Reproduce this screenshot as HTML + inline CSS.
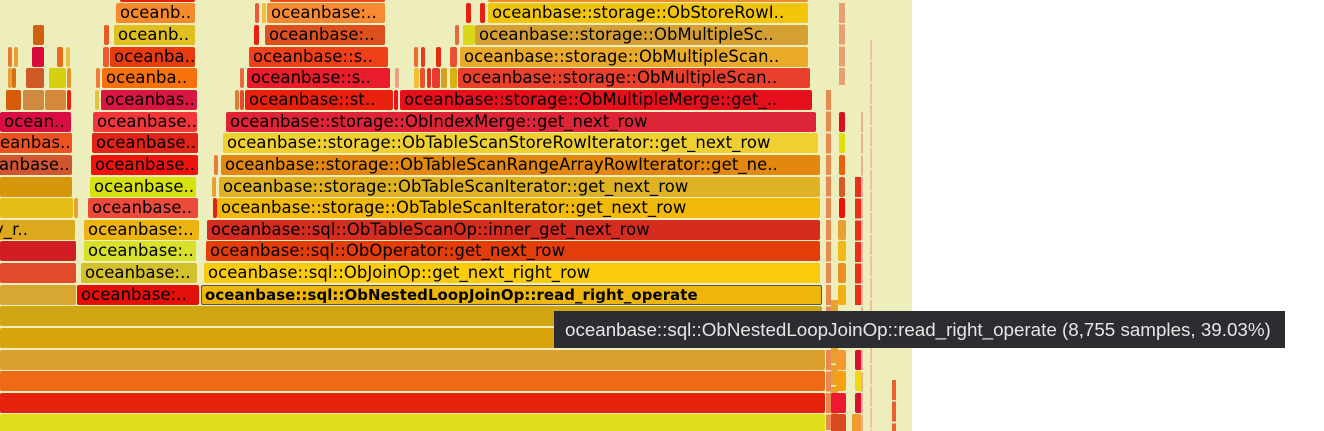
<!DOCTYPE html>
<html><head><meta charset="utf-8"><style>
*{margin:0;padding:0;box-sizing:border-box}
body{width:1324px;height:431px;background:#fff;position:relative;overflow:hidden;font-family:"DejaVu Sans","Liberation Sans",sans-serif}
#fg{position:absolute;left:0;top:0;width:912px;height:431px;background:#eeeebc;overflow:hidden}
.b{position:absolute;height:20px;border-radius:2px;font-size:16.4px;line-height:20px;color:#000;padding-left:4px;white-space:nowrap;overflow:hidden;letter-spacing:0.1px}
.tip{position:absolute;left:554px;top:311px;width:731px;height:37px;background:#2b2d31;color:#e6e6e6;font-family:"Liberation Sans",sans-serif;font-size:18.8px;line-height:37px;padding-left:11px;white-space:nowrap}
</style></head><body>
<div id="fg">
<div class="b" style="left:120px;top:-18px;width:75px;background:#e8200d"></div>
<div class="b" style="left:270px;top:-18px;width:115px;background:#e84a1a"></div>
<div class="b" style="left:488px;top:-18px;width:320px;background:#ec8a30"></div>
<div class="b" style="left:116px;top:3px;width:79px;background:#f88a2e">oceanb..</div>
<div class="b" style="left:267px;top:3px;width:118px;background:#f88a34">oceanbase:..</div>
<div class="b" style="left:255px;top:3px;width:3px;background:#e85a3a"></div>
<div class="b" style="left:262px;top:3px;width:3px;background:#f0c040"></div>
<div class="b" style="left:466px;top:3px;width:5px;background:#e82010"></div>
<div class="b" style="left:480px;top:3px;width:5px;background:#e82010"></div>
<div class="b" style="left:488px;top:3px;width:320px;background:#f2c40a">oceanbase::storage::ObStoreRowI..</div>
<div class="b" style="left:33px;top:25px;width:11px;background:#d06010"></div>
<div class="b" style="left:104px;top:25px;width:5px;background:#e85a20"></div>
<div class="b" style="left:114px;top:25px;width:81px;background:#e0c020">oceanb..</div>
<div class="b" style="left:254px;top:25px;width:5px;background:#e82010"></div>
<div class="b" style="left:265px;top:25px;width:120px;background:#dc5020">oceanbase:..</div>
<div class="b" style="left:455px;top:25px;width:3px;background:#e86a3a"></div>
<div class="b" style="left:463px;top:25px;width:12px;background:#d8d818"></div>
<div class="b" style="left:475px;top:25px;width:333px;background:#d4a034">oceanbase::storage::ObMultipleSc..</div>
<div class="b" style="left:8px;top:47px;width:3px;background:#e87a30"></div>
<div class="b" style="left:14px;top:47px;width:3px;background:#e8a030"></div>
<div class="b" style="left:32px;top:47px;width:12px;background:#d80a3a"></div>
<div class="b" style="left:57px;top:47px;width:6px;background:#e86a20"></div>
<div class="b" style="left:66px;top:47px;width:4px;background:#e8c040"></div>
<div class="b" style="left:103px;top:47px;width:6px;background:#f05a30"></div>
<div class="b" style="left:110px;top:47px;width:85px;background:#e83c0e">oceanba..</div>
<div class="b" style="left:249px;top:47px;width:139px;background:#f0401a">oceanbase::s..</div>
<div class="b" style="left:414px;top:47px;width:4px;background:#f06a30"></div>
<div class="b" style="left:421px;top:47px;width:4px;background:#e83a20"></div>
<div class="b" style="left:436px;top:47px;width:5px;background:#e82a10"></div>
<div class="b" style="left:450px;top:47px;width:7px;background:#e85030"></div>
<div class="b" style="left:460px;top:47px;width:348px;background:#eaaa2a">oceanbase::storage::ObMultipleScan..</div>
<div class="b" style="left:8px;top:68px;width:3px;background:#e8a030"></div>
<div class="b" style="left:12px;top:68px;width:4px;background:#d8701a"></div>
<div class="b" style="left:26px;top:68px;width:18px;background:#d05a28"></div>
<div class="b" style="left:49px;top:68px;width:17px;background:#d4d010"></div>
<div class="b" style="left:67px;top:68px;width:4px;background:#e8902a"></div>
<div class="b" style="left:96px;top:68px;width:4px;background:#f07a3a"></div>
<div class="b" style="left:102px;top:68px;width:95px;background:#f6700c">oceanba..</div>
<div class="b" style="left:240px;top:68px;width:4px;background:#e86a40"></div>
<div class="b" style="left:247px;top:68px;width:143px;background:#e81c2a">oceanbase::s..</div>
<div class="b" style="left:395px;top:68px;width:4px;background:#e8a080"></div>
<div class="b" style="left:414px;top:68px;width:5px;background:#f0c030"></div>
<div class="b" style="left:420px;top:68px;width:5px;background:#e85030"></div>
<div class="b" style="left:427px;top:68px;width:4px;background:#e83020"></div>
<div class="b" style="left:432px;top:68px;width:8px;background:#e83a30"></div>
<div class="b" style="left:441px;top:68px;width:6px;background:#d8a020"></div>
<div class="b" style="left:450px;top:68px;width:7px;background:#d8b010"></div>
<div class="b" style="left:458px;top:68px;width:352px;background:#e8402a">oceanbase::storage::ObMultipleScan..</div>
<div class="b" style="left:6px;top:90px;width:15px;background:#d85a0a"></div>
<div class="b" style="left:23px;top:90px;width:21px;background:#d08a40"></div>
<div class="b" style="left:45px;top:90px;width:21px;background:#d8883a"></div>
<div class="b" style="left:67px;top:90px;width:4px;background:#e82010"></div>
<div class="b" style="left:95px;top:90px;width:4px;background:#e8c040"></div>
<div class="b" style="left:101px;top:90px;width:96px;background:#d81640">oceanbas..</div>
<div class="b" style="left:235px;top:90px;width:4px;background:#e87a30"></div>
<div class="b" style="left:240px;top:90px;width:4px;background:#e84a30"></div>
<div class="b" style="left:245px;top:90px;width:148px;background:#e8200d">oceanbase::st..</div>
<div class="b" style="left:394px;top:90px;width:4px;background:#e81020"></div>
<div class="b" style="left:400px;top:90px;width:412px;background:#e80f1c">oceanbase::storage::ObMultipleMerge::get_..</div>
<div class="b" style="left:0px;top:112px;width:71px;background:#d90f43">ocean..</div>
<div class="b" style="left:93px;top:112px;width:104px;background:#f3363a">oceanbase..</div>
<div class="b" style="left:226px;top:112px;width:590px;background:#de2537">oceanbase::storage::ObIndexMerge::get_next_row</div>
<div class="b" style="left:-4px;top:133px;width:76px;background:#ec5320">eanbas..</div>
<div class="b" style="left:92px;top:133px;width:106px;background:#e0241a">oceanbase..</div>
<div class="b" style="left:223px;top:133px;width:595px;background:#f0d030">oceanbase::storage::ObTableScanStoreRowIterator::get_next_row</div>
<div class="b" style="left:-5px;top:155px;width:77px;background:#cf5631">anbase..</div>
<div class="b" style="left:91px;top:155px;width:107px;background:#ee130f">oceanbase..</div>
<div class="b" style="left:214px;top:155px;width:2px;background:#e87a40"></div>
<div class="b" style="left:221px;top:155px;width:599px;background:#e2870f">oceanbase::storage::ObTableScanRangeArrayRowIterator::get_ne..</div>
<div class="b" style="left:0px;top:177px;width:72px;background:#d6960a"></div>
<div class="b" style="left:90px;top:177px;width:106px;background:#d7e10a">oceanbase..</div>
<div class="b" style="left:212px;top:177px;width:3px;background:#e8a030"></div>
<div class="b" style="left:219px;top:177px;width:601px;background:#dfb223">oceanbase::storage::ObTableScanIterator::get_next_row</div>
<div class="b" style="left:0px;top:198px;width:73px;background:#e6be1a"></div>
<div class="b" style="left:74px;top:198px;width:3px;background:#e8a030"></div>
<div class="b" style="left:88px;top:198px;width:110px;background:#ec4a3a">oceanbase..</div>
<div class="b" style="left:213px;top:198px;width:3px;background:#e82010"></div>
<div class="b" style="left:217px;top:198px;width:603px;background:#f1b90b">oceanbase::storage::ObTableScanIterator::get_next_row</div>
<div class="b" style="left:-10px;top:220px;width:85px;background:#dca81d">y_r..</div>
<div class="b" style="left:84px;top:220px;width:115px;background:#ecb410">oceanbase:..</div>
<div class="b" style="left:207px;top:220px;width:613px;background:#d42c1e">oceanbase::sql::ObTableScanOp::inner_get_next_row</div>
<div class="b" style="left:0px;top:241px;width:76px;background:#d11e22"></div>
<div class="b" style="left:84px;top:241px;width:112px;background:#d8e02a">oceanbase:..</div>
<div class="b" style="left:206px;top:241px;width:614px;background:#e33d0a">oceanbase::sql::ObOperator::get_next_row</div>
<div class="b" style="left:0px;top:263px;width:76px;background:#e34a2c"></div>
<div class="b" style="left:81px;top:263px;width:116px;background:#d4c02a">oceanbase:..</div>
<div class="b" style="left:204px;top:263px;width:616px;background:#fccc0a">oceanbase::sql::ObJoinOp::get_next_right_row</div>
<div class="b" style="left:0px;top:285px;width:76px;background:#d8a732"></div>
<div class="b" style="left:77px;top:285px;width:122px;background:#e40f08">oceanbase:..</div>
<div class="b" style="left:201px;top:285px;width:621px;background:#eeb60a;border:1px solid #555;line-height:18px;padding-left:3px;font-weight:bold;font-size:14.9px">oceanbase::sql::ObNestedLoopJoinOp::read_right_operate</div>
<div class="b" style="left:0px;top:306px;width:822px;background:#cfa512"></div>
<div class="b" style="left:0px;top:328px;width:822px;background:#d8a40a"></div>
<div class="b" style="left:0px;top:350px;width:825px;background:#dba030"></div>
<div class="b" style="left:0px;top:371px;width:825px;background:#ee6a17"></div>
<div class="b" style="left:0px;top:393px;width:825px;background:#e5230d"></div>
<div class="b" style="left:0px;top:414px;width:825px;background:#dede1c"></div>
<div style="position:absolute;left:826px;top:90px;width:5px;height:340px;background:repeating-linear-gradient(#e88a50 0 20px,#eeeebc 20px 21.65px)"></div>
<div style="position:absolute;left:831px;top:300px;width:7px;height:131px;background:repeating-linear-gradient(#e8a030 0 20px,#eeeebc 20px 21.65px)"></div>
<div style="position:absolute;left:839px;top:3px;width:6px;height:82px;background:repeating-linear-gradient(#e8a070 0 20px,#eeeebc 20px 21.65px)"></div>
<div class="b" style="left:839px;top:112px;width:6px;background:#d81020"></div>
<div class="b" style="left:839px;top:133px;width:6px;background:#e0e010"></div>
<div class="b" style="left:839px;top:155px;width:6px;background:#e86010"></div>
<div class="b" style="left:839px;top:177px;width:6px;background:#d85a2a"></div>
<div class="b" style="left:839px;top:198px;width:6px;background:#f01008"></div>
<div class="b" style="left:838px;top:220px;width:8px;background:#e8a030"></div>
<div class="b" style="left:838px;top:241px;width:8px;background:#f0b818"></div>
<div class="b" style="left:838px;top:263px;width:8px;background:#e89020"></div>
<div class="b" style="left:838px;top:285px;width:8px;background:#f0b010"></div>
<div class="b" style="left:836px;top:350px;width:10px;background:#f49a30"></div>
<div class="b" style="left:836px;top:371px;width:10px;background:#f8a010"></div>
<div class="b" style="left:831px;top:393px;width:15px;background:#f01830"></div>
<div class="b" style="left:831px;top:414px;width:15px;background:#d84a20"></div>
<div class="b" style="left:855px;top:350px;width:7px;background:#d81030"></div>
<div class="b" style="left:855px;top:371px;width:7px;background:#f0d810"></div>
<div class="b" style="left:855px;top:393px;width:7px;background:#d81030"></div>
<div class="b" style="left:852px;top:414px;width:10px;background:#f09a30"></div>
<div style="position:absolute;left:855px;top:177px;width:7px;height:130px;background:repeating-linear-gradient(#e83020 0 20px,#eeeebc 20px 21.65px)"></div>
<div style="position:absolute;left:861px;top:112px;width:2px;height:319px;background:repeating-linear-gradient(#e8b090 0 20px,#eeeebc 20px 21.65px)"></div>
<div style="position:absolute;left:870px;top:40px;width:2px;height:391px;background:repeating-linear-gradient(#ecc0a0 0 20px,#eeeebc 20px 21.65px)"></div>
<div style="position:absolute;left:892px;top:380px;width:4px;height:51px;background:repeating-linear-gradient(#e86030 0 20px,#eeeebc 20px 21.65px)"></div>
</div>
<div class="tip">oceanbase::sql::ObNestedLoopJoinOp::read_right_operate (8,755 samples, 39.03%)</div>
</body></html>
